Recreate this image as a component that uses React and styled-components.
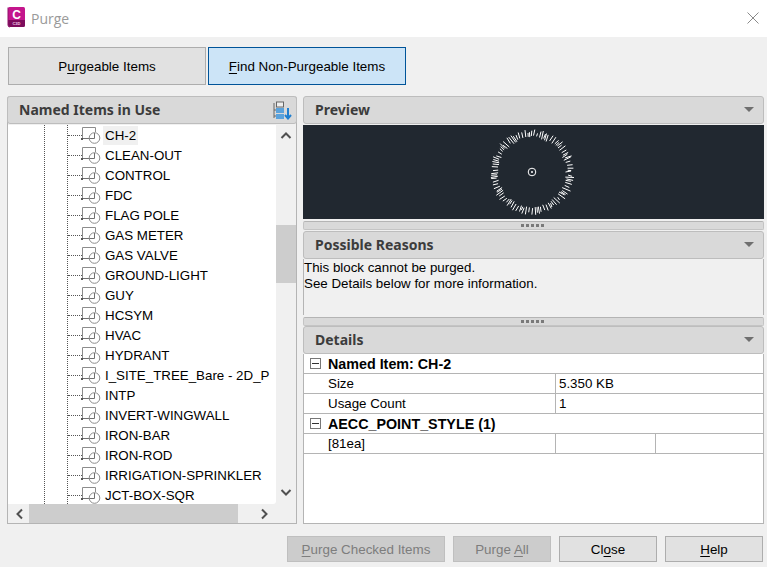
import React from "react";
import styled, { createGlobalStyle } from "styled-components";

const Global = createGlobalStyle`
  html, body { margin: 0; padding: 0; background: #f0f0f0; }
  body { font-family: "Liberation Sans", Arial, sans-serif; font-size: 14px; color: #000; }
  * { box-sizing: border-box; }
`;

const Dialog = styled.div`
  width: 767px; height: 567px; display: flex; flex-direction: column; overflow: hidden; background: #f0f0f0;
`;
const TitleBar = styled.div`
  height: 37px; flex: none; background: #fff; display: flex; align-items: center; padding: 0 8px 0 7px; gap: 5px;
`;
const TitleText = styled.div`
  font-family: "Open Sans", "Noto Sans", sans-serif; font-size: 14px; color: #9a9a9a; flex: 1; margin-bottom: 1px;
`;
const Tabs = styled.div`
  display: flex; gap: 2px; padding: 10px 0 0 8px; flex: none;
`;
const Tab = styled.div`
  width: 198px; height: 38px; display: flex; align-items: center; justify-content: center; font-size: 13.4px;
  background: ${p => (p.$active ? "#cce4f7" : "#e1e1e1")};
  border: 1px solid ${p => (p.$active ? "#005499" : "#adadad")};
`;
const Main = styled.div`
  display: flex; gap: 6px; padding: 11px 3px 0 7px; flex: none; height: 439px;
`;
const LeftPanel = styled.div`
  width: 290px; flex: none; display: flex; flex-direction: column; border: 1px solid #b4b4b4; border-top: none; border-radius: 3px 3px 0 0; background: #f0f0f0;
`;
const RightPanel = styled.div`
  flex: 1; display: flex; flex-direction: column; min-width: 0;
`;
const Header = styled.div`
  height: 28px; flex: none; background: #d9d9d9; border: 1px solid #bdbdbd; border-radius: 3px;
  margin: ${p => (p.$flush ? "0 -1px" : p.$gap ? "1px 0 0" : "0")};
  display: flex; align-items: center; justify-content: space-between; padding: 0 ${p => (p.$flush ? 4 : 9)}px 2px 11px;
  font-family: "Noto Sans", "Open Sans", sans-serif; font-weight: 700; font-size: 14px; color: #3c3c3c;
`;
const Caret = styled.span`
  width: 0; height: 0; border-left: 5px solid transparent; border-right: 5px solid transparent; border-top: 5px solid #6f6f6f; margin-top: 1px;
`;
const TreeArea = styled.div`
  flex: 1; min-height: 0; display: flex; margin-top: 1px;
`;
const TreeList = styled.div`
  flex: 1; background: #fff; overflow: hidden; position: relative; padding-left: 73px; border-radius: 0 0 3px 0;
`;
const Guide = styled.span`
  position: absolute; top: 0; bottom: 0; left: ${p => p.$x}px; border-left: 1px dotted #555;
`;
const Row = styled.div`
  height: 20px; display: flex; align-items: flex-start; padding-top: 1px; position: relative;
`;
const Branch = styled.span`
  position: absolute; left: -13px; top: 10px; width: 14px; border-top: 1px dotted #555;
`;
const RowLabel = styled.span`
  margin-left: 22px; padding: 0 2px; line-height: 19px; white-space: nowrap; font-size: 13.33px; color: #000;
  background: ${p => (p.$sel ? "#f0f0f0" : "transparent")};
`;
const ItemIcon = styled.svg`
  position: absolute; left: 0; top: 0; width: 22px; height: 20px;
`;
const VScroll = styled.div`
  width: 20px; flex: none; background: #f0f0f0; position: relative; display: flex; flex-direction: column; justify-content: space-between; align-items: center; padding: 5px 0 6px;
`;
const VThumb = styled.div`
  position: absolute; left: 0; right: 0; top: 100px; height: 58px; background: #cdcdcd;
`;
const HScroll = styled.div`
  height: 19px; flex: none; background: #f0f0f0; display: flex; align-items: center; justify-content: space-between; padding: 0 26px 0 6px; position: relative;
`;
const HThumb = styled.div`
  position: absolute; left: 21px; top: 0; bottom: 0; width: 209px; background: #cdcdcd;
`;
const ScrollArrow = styled.svg`
  width: 12px; height: 12px; flex: none; display: block; position: relative;
`;
const PreviewPane = styled.div`
  height: 94px; flex: none; margin-top: 1px; padding-right: 3px; background: #212830; display: flex; align-items: center; justify-content: center;
`;
const Splitter = styled.div`
  height: 9px; flex: none; margin-top: 2px; background: #d9d9d9; border: 1px solid #c4c4c4; border-top-color: #b4b4b4; border-radius: 2px; display: flex; align-items: center; justify-content: center; gap: 2px; padding-right: 3px;
`;
const Grip = styled.span`
  width: 3px; height: 3px; background: #7a7a7a;
`;
const ReasonPane = styled.div`
  height: 56px; flex: none; background: #f0f0f0; border: 1px solid #b4b4b4; border-top: none; border-bottom: none; padding: 1px 0 0 0; font-size: 13.33px; line-height: 16px; color: #000;
`;
const DetailsPane = styled.div`
  flex: 1; background: #fff; border: 1px solid #b4b4b4; border-top: none; min-height: 0;
`;
const TableRow = styled.div`
  height: 20px; display: flex; border-bottom: 1px solid #b4b4b4; font-size: 13.33px;
`;
const GroupRow = styled(TableRow)`
  align-items: center; font-weight: 700; font-size: 14.3px; padding-left: 6px; gap: 7px;
`;
const Toggle = styled.span`
  width: 11px; height: 11px; border: 1px solid #777; position: relative; flex: none;
  &::after { content: ""; position: absolute; left: 1px; right: 1px; top: 4px; height: 1px; background: #333; }
`;
const Cell = styled.div`
  width: ${p => p.$w}; flex: ${p => (p.$w ? "none" : "1")}; line-height: 19px; padding-left: ${p => p.$pad || 3}px;
  border-right: ${p => (p.$w ? "1px solid #b4b4b4" : "none")};
`;
const Footer = styled.div`
  display: flex; justify-content: flex-end; gap: 8px; padding: 12px 4px 0 0;
`;
const Btn = styled.div`
  width: ${p => p.$w}px; height: 26px; display: flex; align-items: center; justify-content: center; font-size: 13.4px;
  background: ${p => (p.$off ? "#cccccc" : "#e1e1e1")}; color: ${p => (p.$off ? "#7d7d7d" : "#000")};
  border: 1px solid ${p => (p.$off ? "#bfbfbf" : "#adadad")};
`;
const U = styled.span`text-decoration: underline; text-underline-offset: 2px;`;

const items = ["CH-2","CLEAN-OUT","CONTROL","FDC","FLAG POLE","GAS METER","GAS VALVE","GROUND-LIGHT","GUY","HCSYM","HVAC","HYDRANT","I_SITE_TREE_Bare - 2D_P","INTP","INVERT-WINGWALL","IRON-BAR","IRON-ROD","IRRIGATION-SPRINKLER","JCT-BOX-SQR"];

const Block = () => (
  <ItemIcon viewBox="0 0 22 20" fill="none">
    <path d="M1.5 13V2.5H14.5V7" stroke="#8c8c8c" />
    <path d="M1 13.5H13.5V8" stroke="#707070" />
    <circle cx="13.5" cy="13" r="5.3" stroke="#8c8c8c" />
    <rect x="0" y="13" width="2" height="2" fill="#555" />
  </ItemIcon>
);

const Chevron = ({ d }) => (
  <ScrollArrow viewBox="0 0 12 12" fill="none"><path d={d} stroke="#505050" strokeWidth="2" /></ScrollArrow>
);

const ticks = [];
for (let i = 0; i < 96; i++) {
  const a = (i / 96) * Math.PI * 2 + 0.025 * Math.sin(i * 7.3);
  const s = Math.abs(Math.sin(i * 12.9898) * 43758.5453) % 1;
  const t = Math.abs(Math.sin(i * 78.233) * 12543.123) % 1;
  const r0 = 33.5 + s * 3;
  const r1 = 39 + t * 4;
  const b = a + (s - 0.5) * 0.05;
  ticks.push(`M${(44 + Math.cos(a) * r0).toFixed(1)} ${(44 + Math.sin(a) * r0).toFixed(1)}L${(44 + Math.cos(b) * r1).toFixed(1)} ${(44 + Math.sin(b) * r1).toFixed(1)}`);
}

const Dial = () => (
  <svg width="88" height="88" viewBox="0 0 88 88" fill="none">
    <path d={ticks.join("")} stroke="#fff" strokeWidth="1" />
    <circle cx="44" cy="44" r="3.8" stroke="#fff" />
    <circle cx="44" cy="44" r="1" fill="#fff" />
  </svg>
);

const Grips = () => (
  <Splitter>{[0,1,2,3,4].map(i => <Grip key={i} />)}</Splitter>
);

const Logo = () => (
  <svg width="19" height="21" viewBox="0 0 19 21" style={{ flex: "none", marginBottom: 3 }}>
    <rect x="1" y="0" width="17" height="15" rx="1.5" fill="#c4168c" />
    <path d="M1 13H18V18.5Q18 20 16.5 20H3Q1 20 1 18Z" fill="#7d0d5c" />
    <path d="M1 0.5V18Q1 20 3 20" fill="none" stroke="#8d1068" />
    <text x="9.5" y="11.5" textAnchor="middle" fontFamily="Liberation Sans" fontWeight="700" fontSize="12" fill="#fff">C</text>
    <text x="9.5" y="18.4" textAnchor="middle" fontFamily="Liberation Sans" fontWeight="700" fontSize="4" fill="#f3cfe6">C3D</text>
  </svg>
);

const SortIcon = () => (
  <svg width="19" height="19" viewBox="0 0 19 19" fill="none" style={{ marginTop: 2 }}>
    <rect x="3.5" y="1" width="7" height="5" fill="#eee" stroke="#666" />
    <rect x="3" y="7" width="8" height="5" fill="#5aa2dc" />
    <rect x="3" y="13" width="8" height="5" fill="#5aa2dc" />
    <path d="M1 2V17M1 9H3M1 15H3" stroke="#666" />
    <path d="M15 7V17M12 14L15 17.5L18 14" stroke="#1f7fd0" strokeWidth="2" />
  </svg>
);

export default function App() {
  return (
    <Dialog>
      <Global />
      <TitleBar>
        <Logo />
        <TitleText>Purge</TitleText>
        <svg width="12" height="12" viewBox="0 0 12 12" fill="none" style={{ marginBottom: 2 }}>
          <path d="M0.5 0.5L11.5 11.5M11.5 0.5L0.5 11.5" stroke="#8a8a8a" />
        </svg>
      </TitleBar>
      <Tabs>
        <Tab><span>P<U>u</U>rgeable Items</span></Tab>
        <Tab $active><span><U>F</U>ind Non-Purgeable Items</span></Tab>
      </Tabs>
      <Main>
        <LeftPanel>
          <Header $flush>Named Items in Use<SortIcon /></Header>
          <TreeArea>
            <TreeList>
              <Guide $x={36} />
              <Guide $x={59} />
              {items.map((n, i) => (
                <Row key={n}>
                  <Branch />
                  <Block />
                  <RowLabel $sel={i === 0}>{n}</RowLabel>
                </Row>
              ))}
            </TreeList>
            <VScroll>
              <VThumb />
              <Chevron d="M1.5 8L6 3.5L10.5 8" />
              <Chevron d="M1.5 4L6 8.5L10.5 4" />
            </VScroll>
          </TreeArea>
          <HScroll>
            <HThumb />
            <Chevron d="M8 1.5L3.5 6L8 10.5" />
            <Chevron d="M4 1.5L8.5 6L4 10.5" />
          </HScroll>
        </LeftPanel>
        <RightPanel>
          <Header>Preview<Caret /></Header>
          <PreviewPane><Dial /></PreviewPane>
          <Grips />
          <Header $gap>Possible Reasons<Caret /></Header>
          <ReasonPane>This block cannot be purged.<br />See Details below for more information.</ReasonPane>
          <Grips />
          <Header>Details<Caret /></Header>
          <DetailsPane>
            <GroupRow><Toggle />Named Item: CH-2</GroupRow>
            <TableRow><Cell $w="252px" $pad={24}>Size</Cell><Cell>5.350 KB</Cell></TableRow>
            <TableRow><Cell $w="252px" $pad={24}>Usage Count</Cell><Cell>1</Cell></TableRow>
            <GroupRow><Toggle />AECC_POINT_STYLE (1)</GroupRow>
            <TableRow><Cell $w="252px" $pad={24}>[81ea]</Cell><Cell $w="100px" /><Cell /></TableRow>
          </DetailsPane>
        </RightPanel>
      </Main>
      <Footer>
        <Btn $w={158} $off><span><U>P</U>urge Checked Items</span></Btn>
        <Btn $w={98} $off><span>Purge <U>A</U>ll</span></Btn>
        <Btn $w={98}><span>Cl<U>o</U>se</span></Btn>
        <Btn $w={98}><span><U>H</U>elp</span></Btn>
      </Footer>
    </Dialog>
  );
}
